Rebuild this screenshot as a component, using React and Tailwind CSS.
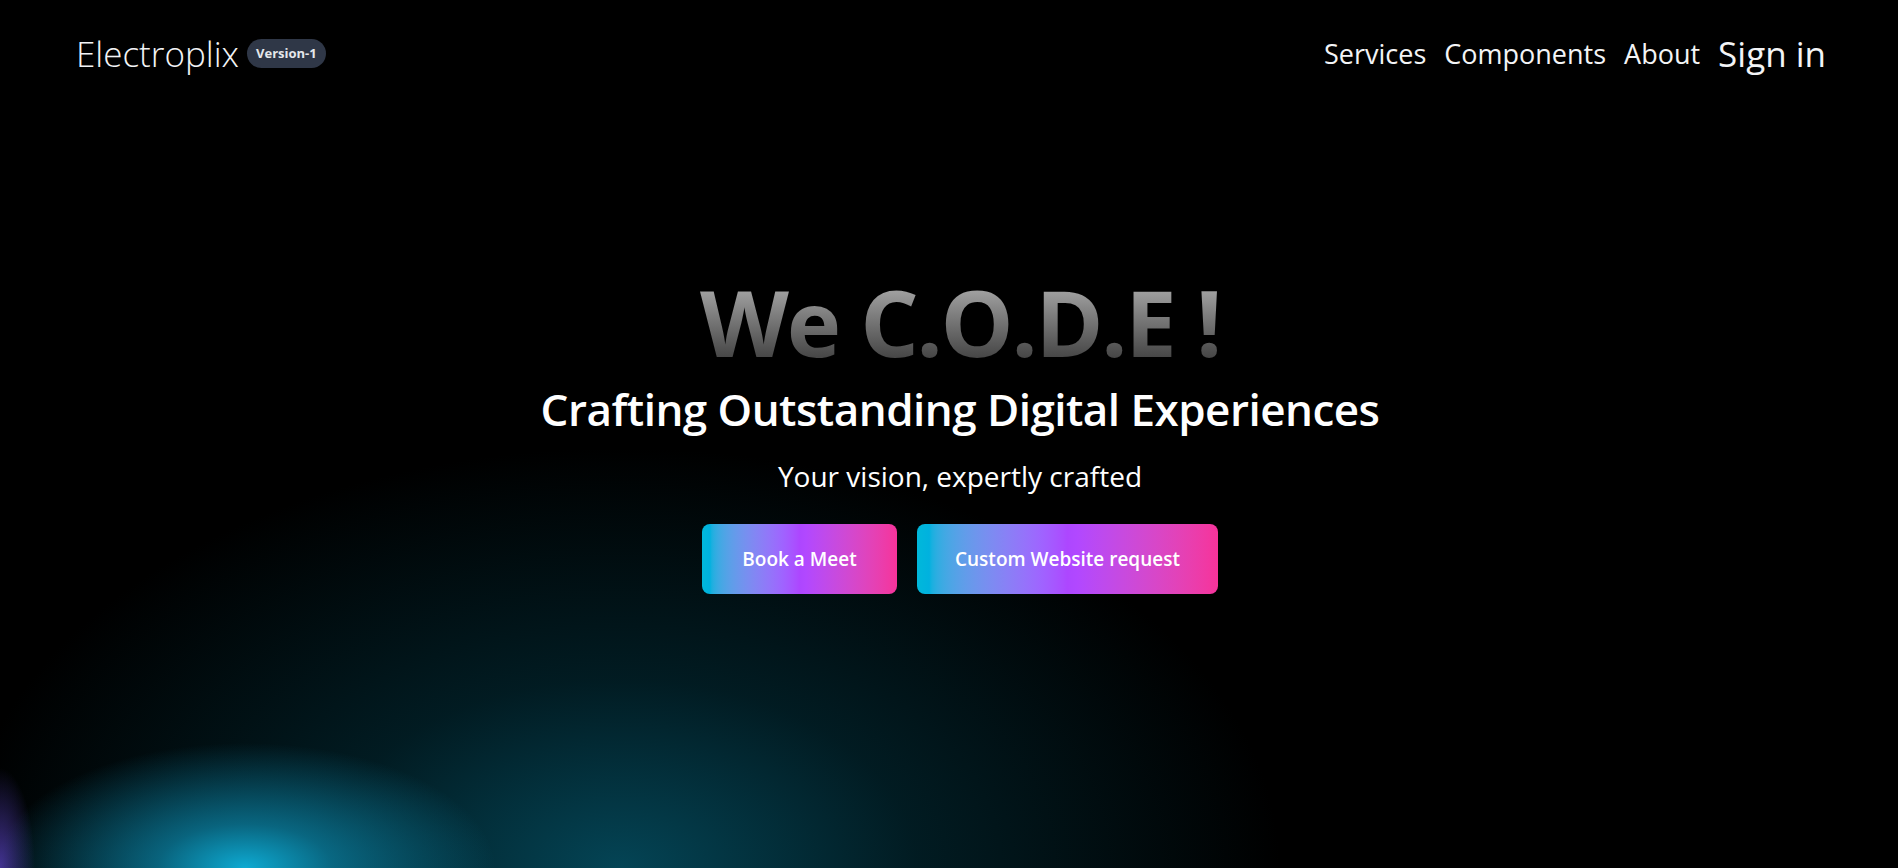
import React from 'react';

const navLinks = ['Services', 'Components', 'About'];

const Header = () => (
  <header className="flex items-center justify-between pl-[76px] pr-[72px] h-[106px]">
    <div className="flex items-center gap-2">
      <span className="text-[35px] font-light text-gray-100 leading-none">Electroplix</span>
      <span className="rounded-full bg-[#2f3747] px-[9px] py-[8px] text-[13px] font-bold text-gray-200 leading-none">
        Version-1
      </span>
    </div>
    <nav className="flex items-center gap-[18px]">
      {navLinks.map((link) => (
        <a key={link} href="#" className="text-[27px] text-gray-100 leading-none">
          {link}
        </a>
      ))}
      <a href="#" className="text-[35px] text-gray-100 leading-none">
        Sign in
      </a>
    </nav>
  </header>
);

const Hero = () => (
  <section className="flex flex-col items-center pl-[22px] pt-[170px] text-center">
    <h1 className="bg-gradient-to-b from-[#b5b5b5] to-[#3a3a3a] bg-clip-text text-[92px] font-bold leading-none tracking-tight text-transparent">
      We C.O.D.E !
    </h1>
    <h2 className="mt-[14px] text-[44px] font-semibold tracking-[-0.012em] text-white leading-tight">
      Crafting Outstanding Digital Experiences
    </h2>
    <p className="mt-[22px] text-[28px] text-white leading-tight">
      Your vision, expertly crafted
    </p>
    <div className="mt-[30px] flex gap-5">
      <button className="h-[70px] w-[195px] rounded-lg bg-gradient-to-r from-cyan-500 via-purple-500 to-pink-500 text-[19px] font-semibold text-white">
        Book a Meet
      </button>
      <button className="h-[70px] w-[301px] rounded-lg bg-gradient-to-r from-cyan-500 via-purple-500 to-pink-500 text-[19px] font-semibold text-white">
        Custom Website request
      </button>
    </div>
  </section>
);

export default function App() {
  return (
    <div
      className="h-[868px] overflow-hidden bg-black font-['Open_Sans',sans-serif] bg-[image:radial-gradient(35px_100px_at_0_100%,rgba(95,70,205,0.7),transparent),radial-gradient(250px_125px_at_245px_100%,rgba(14,170,210,1),rgba(12,135,170,0.7)_35%,transparent),radial-gradient(660px_420px_at_620px_100%,rgba(4,72,90,0.95),rgba(2,42,52,0.65)_45%,transparent)]"
    >
      <Header />
      <Hero />
    </div>
  );
}
